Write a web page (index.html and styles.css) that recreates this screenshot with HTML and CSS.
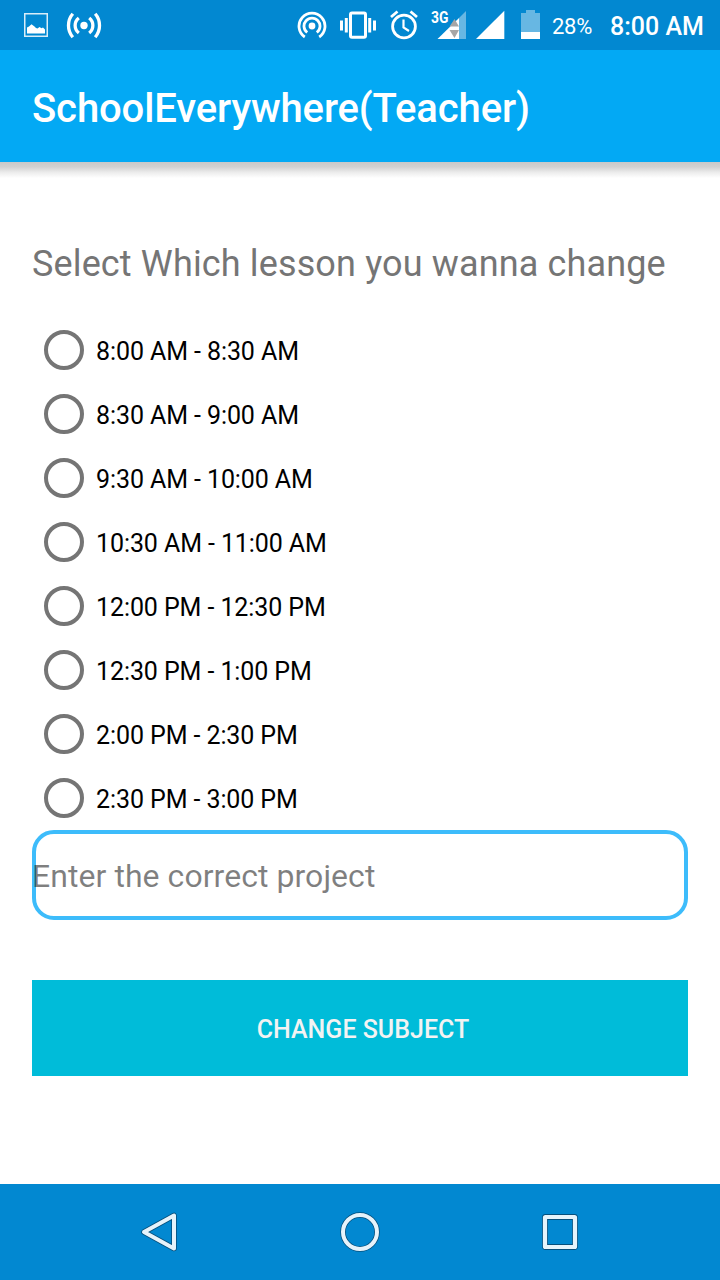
FILE: index.html
```html
<!DOCTYPE html>
<html lang="en">
<head>
<meta charset="utf-8">
<title>SchoolEverywhere(Teacher)</title>
<link rel="stylesheet" href="styles.css">
</head>
<body>
<div class="screen">
  <div class="status-bar">
    <svg class="icon-picture" width="24" height="50" viewBox="24 0 24 50">
      <rect x="24.750" y="13.750" width="22.500" height="22.500" fill="none" stroke="#fff" stroke-opacity=".85" stroke-width="1.500"/>
      <path d="M27 33.500v-6l2-1 2.500-2.300 3 2.300 1.500 1.500 1.500.5 2-1.500 2 1.200 1.500-.7 2 2v4z" fill="#fff"/>
    </svg>
    <svg class="icon-hotspot" width="36" height="50" viewBox="66 0 36 50">
      <circle cx="84" cy="25.500" r="3.700" fill="#fff"/>
      <path d="M78.800 18a9.500 9.500 0 0 0 0 15M89.200 18a9.500 9.500 0 0 1 0 15M72.800 13.800a18 18 0 0 0 0 23.400M95.200 13.800a18 18 0 0 1 0 23.400" fill="none" stroke="#fff" stroke-width="3.300"/>
    </svg>
    <svg class="icon-cast" width="30" height="50" viewBox="297 0 30 50">
      <circle cx="312" cy="26" r="3.400" fill="#fff"/>
      <path d="M307.200 32.500a8 8 0 1 1 9.600 0M304.800 37a13 13 0 1 1 14.400 0" fill="none" stroke="#fff" stroke-width="2.800"/>
    </svg>
    <svg class="icon-vibrate" width="38" height="50" viewBox="339 0 38 50">
      <rect x="350.500" y="13" width="15" height="24.300" rx="1.500" fill="none" stroke="#fff" stroke-width="3"/>
      <path d="M346.300 18v14.500M341.500 20.500v10M369.700 18v14.500M374.500 20.500v10" stroke="#fff" stroke-width="3"/>
    </svg>
    <svg class="icon-alarm" width="30" height="50" viewBox="389 0 30 50">
      <circle cx="404" cy="26.500" r="11.400" fill="none" stroke="#fff" stroke-width="2.800"/>
      <path d="M403.500 19.500v8l5.500 3.500" fill="none" stroke="#fff" stroke-width="2.200"/>
      <path d="M391 17l6.500-5.500M410.500 11.500l6.500 5.500" stroke="#fff" stroke-width="2.800"/>
    </svg>
    <div class="mobile-data">
      <svg width="36" height="50" viewBox="431 0 36 50">
        <path d="M459 18l7-7v28h-7z" fill="#fff" fill-opacity=".4"/>
        <path d="M437.500 39L459 18v21z" fill="#fff"/>
        <path d="M449.500 26.500l5-7.500 4.500 7.500zM449.500 30h9.500l-4.500 8z" fill="#a6a6a6"/>
      </svg>
      <span class="network-type">3G</span>
    </div>
    <svg class="icon-signal" width="29" height="50" viewBox="476 0 29 50">
      <path d="M476 39l28.300-28.300V39z" fill="#fff"/>
    </svg>
    <svg class="icon-battery" width="19" height="50" viewBox="521 0 19 50">
      <path d="M521 13h5v-3h9v3h5v19h-19z" fill="#fff" fill-opacity=".4"/>
      <path d="M521 32h19v7h-19z" fill="#fff"/>
    </svg>
    <span class="battery-level">28%</span>
    <span class="clock">8:00 AM</span>
  </div>

  <header class="app-bar"><h1 class="app-title">SchoolEverywhere(Teacher)</h1></header>

  <main class="content">
    <p class="prompt">Select Which lesson you wanna change</p>
    <div class="lessons">
      <label class="lesson"><input class="radio" type="radio" name="lesson"><span>8:00 AM - 8:30 AM</span></label>
      <label class="lesson"><input class="radio" type="radio" name="lesson"><span>8:30 AM - 9:00 AM</span></label>
      <label class="lesson"><input class="radio" type="radio" name="lesson"><span>9:30 AM - 10:00 AM</span></label>
      <label class="lesson"><input class="radio" type="radio" name="lesson"><span>10:30 AM - 11:00 AM</span></label>
      <label class="lesson"><input class="radio" type="radio" name="lesson"><span>12:00 PM - 12:30 PM</span></label>
      <label class="lesson"><input class="radio" type="radio" name="lesson"><span>12:30 PM - 1:00 PM</span></label>
      <label class="lesson"><input class="radio" type="radio" name="lesson"><span>2:00 PM - 2:30 PM</span></label>
      <label class="lesson"><input class="radio" type="radio" name="lesson"><span>2:30 PM - 3:00 PM</span></label>
    </div>
    <div class="subject-field"><span class="hint">Enter the correct project</span></div>
    <button class="submit" type="button">CHANGE SUBJECT</button>
  </main>

  <nav class="nav-bar">
    <svg class="nav-icon" width="40" height="44" viewBox="140 1210 40 44">
      <path d="M144 1232L174 1215.500v33z" fill="none" stroke="#064f7c" stroke-width="5.600" stroke-linejoin="round"/>
      <path d="M144 1232L174 1215.500v33z" fill="none" stroke="#e6f3fb" stroke-width="4" stroke-linejoin="round"/>
    </svg>
    <svg class="nav-icon" width="40" height="44" viewBox="340 1210 40 44">
      <circle cx="360" cy="1232" r="17" fill="none" stroke="#064f7c" stroke-width="5.500"/>
      <circle cx="360" cy="1232" r="17" fill="none" stroke="#e6f3fb" stroke-width="4"/>
    </svg>
    <svg class="nav-icon" width="40" height="44" viewBox="540 1210 40 44">
      <rect x="545" y="1217" width="30" height="30" rx=".5" fill="none" stroke="#064f7c" stroke-width="5.800" stroke-linejoin="round"/>
      <rect x="545" y="1217" width="30" height="30" rx=".5" fill="none" stroke="#e6f3fb" stroke-width="4.200" stroke-linejoin="round"/>
    </svg>
  </nav>
</div>
</body>
</html>
```
FILE: styles.css
```css
* { box-sizing: border-box; }
body {
  margin: 0;
  font-family: Roboto, "Liberation Sans", sans-serif;
  background: #fff;
}
.screen {
  display: flex;
  flex-direction: column;
  width: 720px;
  height: 1280px;
  overflow: hidden;
}
.status-bar {
  display: flex;
  align-items: center;
  height: 50px;
  flex: none;
  padding-left: 24px;
  background: #0288d1;
  color: #fff;
  white-space: nowrap;
}
.status-bar svg { display: block; flex: none; }
.icon-hotspot { margin-left: 18px; }
.icon-cast { margin-left: 195px; }
.icon-vibrate { margin-left: 12px; }
.icon-alarm { margin-left: 12px; }
.mobile-data { position: relative; margin-left: 12px; }
.network-type {
  position: absolute;
  left: 0;
  top: 9px;
  font-size: 16px;
  line-height: 18px;
  font-weight: 700;
  transform: scaleX(.87);
  transform-origin: left;
}
.icon-signal { margin-left: 9px; }
.icon-battery { margin-left: 16px; }
.battery-level {
  width: 58px;
  padding-left: 12px;
  font-size: 22px;
  line-height: 26px;
  padding-top: 3px;
  letter-spacing: -.3px;
}
.clock {
  margin-left: 12px;
  font-size: 25px;
  line-height: 30px;
  font-weight: 500;
  padding-top: 3px;
}
.app-bar {
  display: flex;
  align-items: center;
  flex: none;
  height: 112px;
  padding: 6px 32px 0;
  background: #03a9f4;
  position: relative;
}
.app-bar::after {
  content: "";
  position: absolute;
  left: 0;
  right: 0;
  top: 112px;
  height: 16px;
  background: linear-gradient(#c9c9c9, #d1d1d1 30%, #ececec 65%, #fff);
}
.app-title {
  margin: 0;
  color: #fff;
  font-size: 40px;
  line-height: 48px;
  font-weight: 500;
  letter-spacing: -.11px;
  white-space: nowrap;
}
.content {
  flex: 1;
  display: flex;
  flex-direction: column;
  padding: 80px 32px 0;
}
.prompt {
  margin: 0;
  height: 76px;
  color: #757575;
  font-size: 36px;
  line-height: 44px;
  letter-spacing: .14px;
  white-space: nowrap;
}
.lessons { display: flex; flex-direction: column; }
.lesson {
  display: flex;
  align-items: center;
  gap: 12px;
  height: 64px;
  padding-left: 12px;
  font-size: 25px;
  line-height: 30px;
  letter-spacing: -.09px;
  color: #000;
}
.lesson span { padding-top: 3px; }
.radio {
  appearance: none;
  flex: none;
  width: 40px;
  height: 40px;
  margin: 0;
  border: 4px solid #757575;
  border-radius: 50%;
}
.subject-field {
  display: flex;
  align-items: center;
  height: 90px;
  border: 4px solid #3dbcfb;
  border-radius: 22px;
}
.hint {
  margin-left: -4px;
  padding-top: 2px;
  font-size: 32px;
  line-height: 38px;
  letter-spacing: .05px;
  color: rgba(0, 0, 0, .5);
}
.submit {
  height: 96px;
  margin-top: 60px;
  padding: 3px 0 0 6px;
  border: 0;
  background: #00bcd9;
  color: #f3f3f3;
  font-family: inherit;
  font-size: 25px;
  line-height: 30px;
  font-weight: 500;
}
.nav-bar {
  display: flex;
  justify-content: center;
  align-items: center;
  gap: 160px;
  flex: none;
  height: 96px;
  background: #0288d1;
}
.nav-icon { display: block; }
```
